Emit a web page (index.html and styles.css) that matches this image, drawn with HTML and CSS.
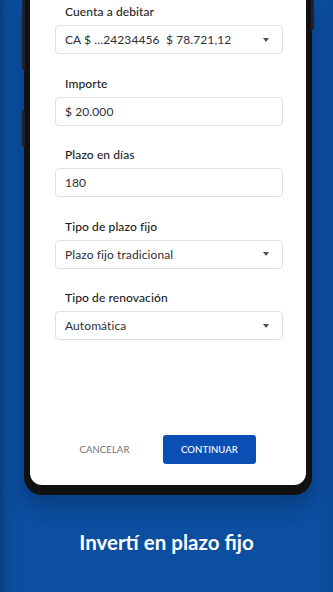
FILE: index.html
```html
<!DOCTYPE html>
<html lang="es">
<head>
<meta charset="utf-8">
<title>Invertí en plazo fijo</title>
<link rel="stylesheet" href="styles.css">
</head>
<body>
<div class="page">
  <div class="phone">
    <span class="side side-a"></span>
    <span class="side side-b"></span>
    <span class="side side-c"></span>
    <div class="screen">
      <div class="form">
        <div class="group">
          <div class="label">Cuenta a debitar</div>
          <div class="field select"><span>CA $ ...24234456&nbsp;&nbsp;$ 78.721,12</span><i class="arrow"></i></div>
        </div>
        <div class="group">
          <div class="label">Importe</div>
          <div class="field"><span>$ 20.000</span></div>
        </div>
        <div class="group">
          <div class="label">Plazo en días</div>
          <div class="field"><span>180</span></div>
        </div>
        <div class="group">
          <div class="label">Tipo de plazo fijo</div>
          <div class="field select"><span>Plazo fijo tradicional</span><i class="arrow"></i></div>
        </div>
        <div class="group">
          <div class="label">Tipo de renovación</div>
          <div class="field select"><span>Automática</span><i class="arrow"></i></div>
        </div>
      </div>
      <div class="actions">
        <button class="btn btn-cancel">CANCELAR</button>
        <button class="btn btn-primary">CONTINUAR</button>
      </div>
    </div>
  </div>
  <h1 class="title">Invertí en plazo fijo</h1>
</div>
</body>
</html>
```
FILE: styles.css
```css
* { box-sizing: border-box; }
html, body { margin: 0; padding: 0; }
body {
  width: 333px;
  height: 592px;
  overflow: hidden;
  font-family: Lato, "Noto Sans", sans-serif;
  background: #0b4d9e;
}
.page {
  width: 333px;
  height: 592px;
  background: linear-gradient(to right, #083d7e 0, #0b4a98 6px, #0c4e9f 20px, #0c4e9f 320px, #0b4a98 333px);
  overflow: hidden;
}
.phone {
  position: relative;
  width: 288px;
  margin-left: 24px;
  border: 6px solid #111;
  border-top: 0;
  border-bottom-width: 10px;
  border-radius: 0 0 18px 18px;
  background: #111;
  box-shadow: 0 10px 18px rgba(3, 30, 70, 0.35);
}
.side {
  position: absolute;
  width: 3px;
  background: #1c2230;
  border-radius: 1px;
}
.side-a { left: -8px; top: 0; height: 70px; }
.side-b { left: -8px; top: 110px; height: 37px; }
.side-c { right: -8px; top: 0; height: 30px; }
.screen {
  height: 485px;
  background: #fff;
  border-radius: 0 0 12px 12px;
  display: flex;
  flex-direction: column;
  padding: 4px 23px 21px 25px;
}
.group {
  display: flex;
  flex-direction: column;
  margin-bottom: 21.5px;
}
.label {
  font-size: 12px;
  line-height: 16px;
  height: 16px;
  color: #222;
  margin-bottom: 5px;
  padding-left: 10px;
  font-weight: 500;
  letter-spacing: 0.1px;
}
.field {
  height: 29px;
  border: 1px solid #dedfe8;
  border-radius: 4px;
  display: flex;
  align-items: center;
  justify-content: space-between;
  padding: 0 13px 0 9px;
  font-size: 12px;
  color: #2d2f36;
  letter-spacing: 0.1px;
}
.arrow {
  display: block;
  width: 0;
  height: 0;
  border-left: 3.5px solid transparent;
  border-right: 3.5px solid transparent;
  border-top: 4px solid #4a4f5c;
}
.actions {
  margin-top: auto;
  display: flex;
  gap: 12px;
  padding-left: 3px;
}
.btn {
  width: 93px;
  height: 29px;
  border: 0;
  border-radius: 3px;
  font-family: Lato, "Noto Sans", sans-serif;
  font-size: 9.5px;
  letter-spacing: 0.1px;
  cursor: pointer;
}
.btn-cancel {
  background: transparent;
  color: #707070;
}
.btn-primary {
  background: #0a4fb4;
  color: #fff;
  font-weight: 500;
}
.title {
  margin: 35px 0 0;
  text-align: center;
  color: #fff;
  font-size: 20.5px;
  line-height: 24px;
  font-weight: 700;
}
```
